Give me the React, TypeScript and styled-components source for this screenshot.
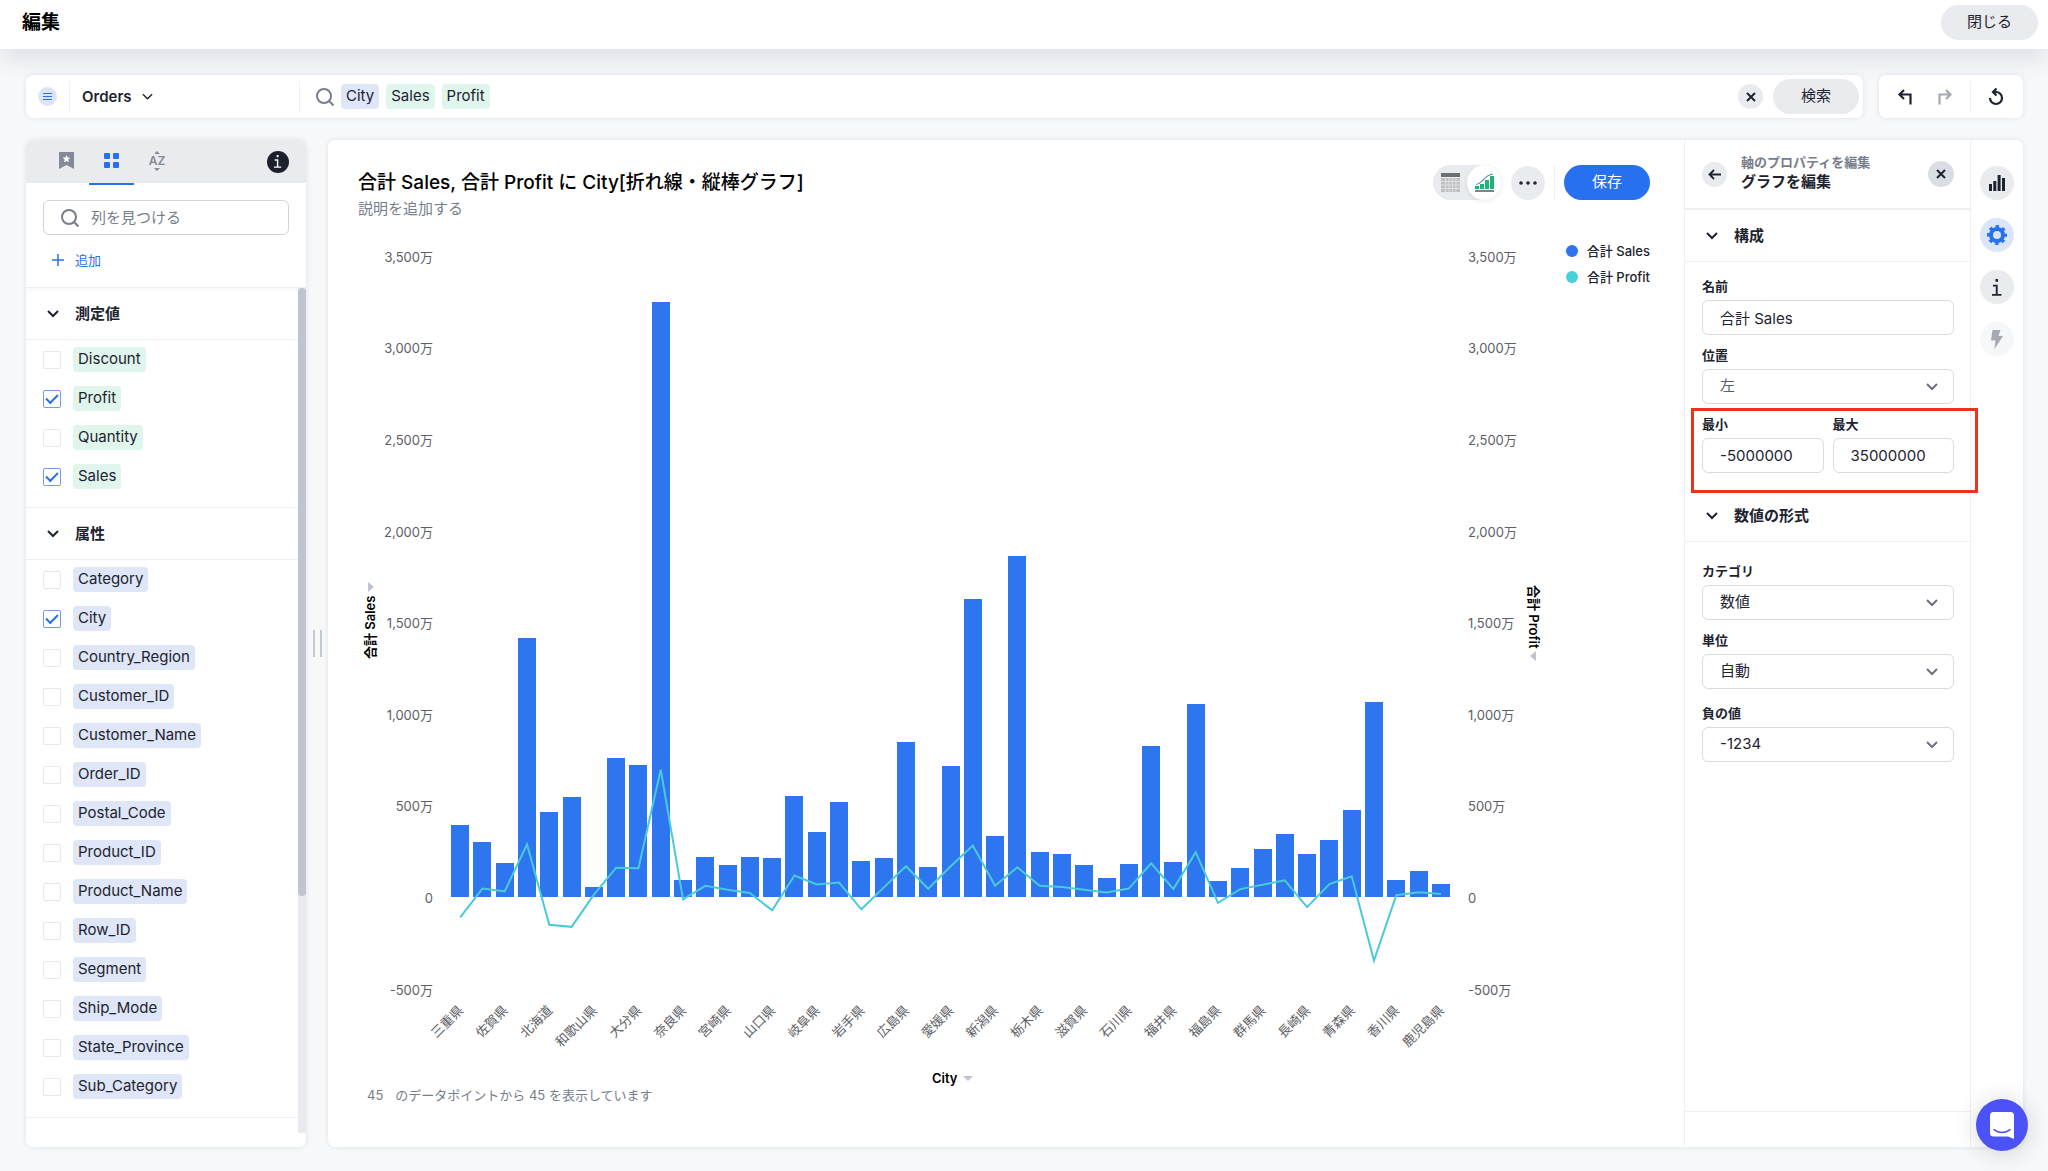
import React from "react";
import styled, { createGlobalStyle } from "styled-components";

const ink = "#1d232f";
const blue = "#2770ef";
const muted = "#777e8b";
const line = "#eef0f3";
const grey = "#eaebef";

const GlobalStyle = createGlobalStyle`
  *, *::before, *::after { box-sizing: border-box; }
  body {
    margin: 0;
    background: #f6f8fa;
    color: ${ink};
    font-family: Inter, "Noto Sans CJK JP", sans-serif;
    font-size: 15px;
    line-height: 20px;
  }
  button, input, select { font: inherit; color: inherit; margin: 0; }
  button { border: 0; padding: 0; background: none; cursor: pointer; }
  h1, h2, h3, p, ul { margin: 0; padding: 0; }
  ul { list-style: none; }
  svg { display: block; flex: none; }
`;

const Page = styled.div`
  display: flex;
  flex-direction: column;
  min-height: 100vh;
`;

const Header = styled.header`
  display: flex;
  align-items: center;
  justify-content: space-between;
  height: 49px;
  padding: 0 10px 4px 22px;
  background: #fff;
  box-shadow: 0 8px 24px rgba(25, 45, 65, 0.12);
`;

const PageTitle = styled.h1`
  color: #000;
  font-size: 19px;
  font-weight: 700;
  line-height: 28px;
`;

const Pill = styled.button<{ $primary?: boolean; $wide?: boolean }>`
  width: ${(p) => (p.$wide ? 97 : 86)}px;
  height: 35px;
  border-radius: 18px;
  padding-bottom: 2px;
  background: ${(p) => (p.$primary ? blue : grey)};
  color: ${(p) => (p.$primary ? "#fff" : ink)};
`;

const Round = styled.button<{ $size: number; $bg?: string; $color?: string }>`
  display: flex;
  flex: none;
  align-items: center;
  justify-content: center;
  width: ${(p) => p.$size}px;
  height: ${(p) => p.$size}px;
  border-radius: 50%;
  background: ${(p) => p.$bg ?? grey};
  color: ${(p) => p.$color ?? ink};
`;

const Workspace = styled.main`
  display: flex;
  flex: 1;
  flex-direction: column;
  gap: 22px;
  padding: 26px 25px 24px 26px;
`;

const TopRow = styled.div`
  display: flex;
  gap: 16px;
`;

const Card = styled.section`
  background: #fff;
  border-radius: 7px;
  box-shadow: 0 0 5px rgba(25, 45, 65, 0.1);
`;

const SearchBar = styled(Card)`
  display: flex;
  flex: 1;
  align-items: center;
  height: 43px;
  padding-right: 4px;
`;

const SourceArea = styled.div`
  display: flex;
  align-items: center;
  width: 274px;
  height: 31px;
  padding-left: 12px;
  border-right: 1px solid ${line};
`;

const SourceButton = styled.button`
  display: flex;
  align-items: center;
  gap: 10px;
  height: 31px;
  margin-left: 12px;
  padding-left: 12px;
  border-left: 1px solid ${line};
  font-weight: 600;
`;

const Tokens = styled.div`
  display: flex;
  flex: 1;
  align-items: center;
  gap: 7px;
  padding-left: 16px;
  color: ${muted};
`;

const Chip = styled.span<{ $measure?: boolean }>`
  display: inline-block;
  height: 25px;
  padding: 0 5px;
  border-radius: 4px;
  background: ${(p) => (p.$measure ? "#e0f6ed" : "#dee6f7")};
  color: ${ink};
  line-height: 24px;
`;

const BareInput = styled.input`
  flex: 1;
  min-width: 0;
  height: 31px;
  border: 0;
  outline: 0;
  padding: 0;
  background: none;
  &::placeholder { color: ${muted}; opacity: 1; }
`;

const SearchActions = styled.div`
  display: flex;
  align-items: center;
  gap: 10px;
`;

const History = styled(Card)`
  display: flex;
  align-items: center;
  gap: 6px;
  padding: 0 10px 0 9px;
`;

const Rule = styled.span<{ $gap: number; $height: number }>`
  width: 1px;
  height: ${(p) => p.$height}px;
  margin: 0 ${(p) => p.$gap}px;
  background: ${line};
`;

const Body = styled.div`
  display: flex;
  flex: 1;
`;

const Sidebar = styled(Card)`
  display: flex;
  flex: none;
  flex-direction: column;
  width: 280px;
  overflow: hidden;
`;

const Tabs = styled.div`
  display: flex;
  align-items: center;
  height: 43px;
  padding: 0 17px 0 18px;
  background: ${grey};
`;

const Tab = styled.button<{ $active?: boolean }>`
  display: flex;
  align-items: center;
  justify-content: center;
  width: 45px;
  height: 43px;
  padding-bottom: 2px;
  color: ${(p) => (p.$active ? blue : "#858b96")};
  box-shadow: ${(p) => (p.$active ? `0 2px 0 ${blue}` : "none")};
`;

const Push = styled.div`
  margin-left: auto;
`;

const Finder = styled.div`
  padding: 17px 17px 17px;
  border-bottom: 1px solid ${line};
  box-shadow: 0 2px 4px rgba(25, 45, 65, 0.04);
`;

const FinderBox = styled.label`
  display: flex;
  align-items: center;
  gap: 12px;
  height: 35px;
  padding: 0 17px;
  border: 1px solid #d0d4db;
  border-radius: 6px;
  color: ${muted};
`;

const AddButton = styled.button`
  display: flex;
  align-items: center;
  gap: 11px;
  margin-top: 15px;
  padding-left: 9px;
  color: ${blue};
  font-size: 13px;
  line-height: 20px;
`;

const ListArea = styled.div`
  display: flex;
  flex: 1;
  margin-bottom: 14px;
`;

const Lists = styled.div`
  flex: 1;
`;

const Track = styled.div`
  width: 8px;
  background: #e9eaee;
`;

const Thumb = styled.div`
  height: 72%;
  border-radius: 4px;
  background: #c0c4ce;
`;

const SectionHead = styled.button`
  display: flex;
  align-items: center;
  gap: 16px;
  width: 100%;
  height: 52px;
  padding: 0 21px;
  border-bottom: 1px solid ${line};
  font-weight: 700;
`;

const FieldList = styled.ul`
  padding-bottom: 11px;
  border-bottom: 1px solid ${line};
`;

const FieldRow = styled.li`
  display: flex;
  align-items: center;
  height: 39px;
  padding-left: 17px;
`;

const FieldLabel = styled.label`
  display: flex;
  align-items: center;
  gap: 12px;
`;

const Check = styled.input`
  appearance: none;
  display: flex;
  justify-content: center;
  width: 18px;
  height: 18px;
  margin: 0;
  border: 1px solid #e6e8ec;
  border-radius: 2px;
  background: #fff;
  &:checked { border-color: #6f9cec; }
  &:checked::after {
    content: "";
    width: 12px;
    height: 7px;
    margin-top: 3px;
    border: solid ${blue};
    border-width: 0 0 2px 2px;
    transform: rotate(-45deg);
  }
`;

const Gutter = styled.div`
  display: flex;
  flex: none;
  align-items: center;
  justify-content: center;
  width: 22px;
`;

const Handle = styled.div`
  width: 9px;
  height: 27px;
  border: solid #c5c9d1;
  border-width: 0 2px;
`;

const MainCard = styled(Card)`
  display: flex;
  flex: 1;
  min-width: 0;
`;

const ChartPane = styled.div`
  flex: 1;
  min-width: 0;
  padding: 25px 34px 0 30px;
`;

const ChartHead = styled.div`
  display: flex;
  align-items: flex-start;
  justify-content: space-between;
  height: 56px;
  margin-bottom: 16px;
`;

const ChartTitle = styled.h2`
  padding-top: 4px;
  color: #000;
  font-size: 19px;
  font-weight: 500;
  line-height: 28px;
`;

const ChartNote = styled.p`
  color: ${muted};
  line-height: 24px;
`;

const Controls = styled.div`
  display: flex;
  align-items: center;
`;

const Toggle = styled.div`
  display: flex;
  align-items: center;
  width: 68px;
  height: 35px;
  margin-right: 10px;
  border-radius: 18px;
  background: ${grey};
`;

const TogglePart = styled.button<{ $on?: boolean }>`
  display: flex;
  align-items: center;
  justify-content: center;
  width: 34px;
  height: 35px;
  border-radius: 50%;
  background: ${(p) => (p.$on ? "#fff" : "none")};
  box-shadow: ${(p) => (p.$on ? "0 1px 5px rgba(25, 45, 65, 0.1)" : "none")};
`;

const ChartRow = styled.div`
  display: flex;
  gap: 16px;
`;

const Plot = styled.div`
  flex: 1;
  min-width: 0;
  svg { width: 100%; height: auto; overflow: visible; }
  text { font-size: 13px; fill: #5c6066; }
  .name { font-weight: 600; fill: #000; }
`;

const Legend = styled.ul`
  flex: none;
  width: 84px;
  padding-top: 1px;
`;

const LegendItem = styled.li<{ $color: string }>`
  display: flex;
  align-items: center;
  gap: 9px;
  color: ${ink};
  font-size: 13px;
  font-weight: 500;
  line-height: 26px;
  white-space: nowrap;
  &::before {
    content: "";
    width: 12px;
    height: 12px;
    border-radius: 50%;
    background: ${(p) => p.$color};
  }
`;

const PointCount = styled.p`
  display: flex;
  gap: 12px;
  padding-left: 9px;
  color: ${muted};
  font-size: 13px;
  line-height: 22px;
`;

const Inspector = styled.aside`
  display: flex;
  flex: none;
  flex-direction: column;
  width: 287px;
  border: solid ${line};
  border-width: 0 1px;
`;

const InspectorHead = styled.div`
  display: flex;
  align-items: center;
  gap: 14px;
  height: 70px;
  padding: 0 16px 0 17px;
  border-bottom: 2px solid ${line};
`;

const InspectorNames = styled.div`
  padding-bottom: 4px;
`;

const Crumb = styled.p`
  color: ${muted};
  font-size: 13px;
  font-weight: 700;
  line-height: 20px;
`;

const InspectorTitle = styled.h2`
  font-size: 15px;
  font-weight: 700;
  line-height: 20px;
`;

const Group = styled.div<{ $top?: number; $bottom?: number }>`
  display: flex;
  flex-direction: column;
  gap: 10px;
  padding: ${(p) => p.$top ?? 14}px 16px ${(p) => p.$bottom ?? 0}px 17px;
`;

const Field = styled.label`
  display: flex;
  flex: 1;
  flex-direction: column;
  gap: 4px;
  min-width: 0;
  font-size: 13px;
  font-weight: 700;
  line-height: 20px;
`;

const TextBox = styled.input`
  width: 100%;
  height: 35px;
  padding: 0 17px;
  border: 1px solid #d8dbe1;
  border-radius: 6px;
  background: #fff;
  font-size: 15px;
  font-weight: 400;
`;

const SelectWrap = styled.span`
  position: relative;
  display: block;
  svg {
    position: absolute;
    top: 13px;
    right: 16px;
    color: #6b7280;
    pointer-events: none;
  }
`;

const Select = styled.select<{ $dim?: boolean }>`
  appearance: none;
  display: block;
  width: 100%;
  height: 35px;
  padding: 0 17px 2px;
  border: 1px solid #d8dbe1;
  border-radius: 6px;
  background: #fff;
  color: ${(p) => (p.$dim ? "#5a606c" : ink)};
  font-size: 15px;
  font-weight: 400;
`;

const RangeRow = styled.div`
  position: relative;
  display: flex;
  gap: 9px;
  &::after {
    content: "";
    position: absolute;
    inset: -6px -24px -20px -11px;
    border: 3px solid #e93419;
    pointer-events: none;
  }
`;

const InspectorFoot = styled.div`
  height: 36px;
  margin-top: auto;
  border-top: 1px solid ${line};
`;

const Rail = styled.nav`
  display: flex;
  flex: none;
  flex-direction: column;
  align-items: center;
  gap: 18px;
  width: 52px;
  padding-top: 26px;
`;

const Chat = styled(Round)`
  position: fixed;
  right: 20px;
  bottom: 20px;
  box-shadow: 0 2px 24px rgba(0, 0, 0, 0.16);
`;

type ChevronProps = { size?: number; weight?: number };
const Chevron = ({ size = 12, weight = 2 }: ChevronProps) => (
  <svg width={size} height="9" viewBox="0 0 12 9" fill="none" stroke="currentColor" strokeWidth={weight}>
    <path d="M1 2l5 5 5-5" />
  </svg>
);

const Magnifier = () => (
  <svg width="18" height="18" viewBox="0 0 18 18" fill="none" stroke="currentColor" strokeWidth="2">
    <circle cx="8" cy="8" r="7" />
    <path d="M13 13l4.5 4.5" />
  </svg>
);

const Cross = () => (
  <svg width="10" height="10" viewBox="0 0 10 10" fill="none" stroke="currentColor" strokeWidth="2">
    <path d="M1 1l8 8M9 1L1 9" />
  </svg>
);

const InfoMark = ({ h = 16 }: { h?: number }) => (
  <svg width={(h * 10) / 18} height={h} viewBox="0 0 10 18" fill="none" stroke="currentColor" strokeWidth="2">
    <path d="M5 0v3" strokeWidth="2.6" />
    <path d="M1 7h4v9M0 16.8h10" />
  </svg>
);

const Turn = ({ flip }: { flip?: boolean }) => (
  <svg width="16" height="16" viewBox="0 0 16 16" fill="none" stroke="currentColor" strokeWidth="2.2">
    <g transform={flip ? "translate(16 0) scale(-1 1)" : undefined}>
      <path d="M7 1L2.500 5.500 7 10M2.500 5.500H13.500V15.500" />
    </g>
  </svg>
);

const START = 91;
const END = 1094;
const ZERO = 660;
const UNIT = 91.6 / 500;

const sales = [
  391, 302, 186, 1416, 462, 544, 55, 757, 721, 3248, 91, 221, 175, 221, 213, 552, 357, 521, 197, 215, 847, 162, 715,
  1624, 334, 1864, 245, 233, 174, 103, 178, 826, 190, 1052, 85, 156, 263, 343, 233, 309, 473, 1064, 93, 144, 73,
];
const profit = [
  -111, 46, 31, 288, -152, -163, 13, 160, 157, 695, -13, 61, 40, 22, -73, 117, 68, 79, -67, 51, 168, 45, 166, 281, 61,
  162, 61, 55, 39, 25, 46, 184, 43, 245, -32, 43, 67, 91, -55, 71, 113, -347, 10, 26, 16,
];
const cities = [
  "三重県", "佐賀県", "北海道", "和歌山県", "大分県", "奈良県", "宮崎県", "山口県", "岐阜県", "岩手県", "広島県", "愛媛県",
  "新潟県", "栃木県", "滋賀県", "石川県", "福井県", "福島県", "群馬県", "長崎県", "青森県", "香川県", "鹿児島県",
];
const ticks = [3500, 3000, 2500, 2000, 1500, 1000, 500, 0, -500];

const step = (END - START) / sales.length;
const xAt = (i: number) => START + step * (i + 0.5);
const yAt = (v: number) => ZERO - v * UNIT;
const tickText = (v: number) => (v === 0 ? "0" : `${v.toLocaleString("en-US")}万`);

const ComboChart = () => (
  <svg viewBox="0 0 1192 847" role="img" aria-label="合計 Sales, 合計 Profit に City">
    {ticks.map((t) => (
      <g key={t}>
        <text x="75" y={yAt(t) + 6} textAnchor="end">{tickText(t)}</text>
        <text x="1110" y={yAt(t) + 6}>{tickText(t)}</text>
      </g>
    ))}
    {sales.map((v, i) => (
      <rect
        key={i}
        x={Math.round(xAt(i) - 9)}
        y={Math.round(yAt(v))}
        width="18"
        height={ZERO - Math.round(yAt(v))}
        fill="#2e75f0"
      />
    ))}
    <polyline
      points={profit.map((v, i) => `${xAt(i)},${yAt(v)}`).join(" ")}
      fill="none"
      stroke="#48cbd6"
      strokeWidth="2"
    />
    {cities.map((c, i) => (
      <text key={c} textAnchor="end" transform={`translate(${xAt(i * 2) + 4} 774) rotate(-45)`}>
        {c}
      </text>
    ))}
    <text className="name" transform="translate(17 422) rotate(-90)">合計 Sales</text>
    <path d="M10 345l6 5-6 5z" fill="#c0c4ce" />
    <text className="name" transform="translate(1171 348) rotate(90)">合計 Profit</text>
    <path d="M1178 414l-6 5 6 5z" fill="#c0c4ce" />
    <text className="name" x="574" y="846">City</text>
    <path d="M605 839h10l-5 5z" fill="#c0c4ce" />
  </svg>
);

const measures = ["Discount", "Profit", "Quantity", "Sales"];
const attributes = [
  "Category", "City", "Country_Region", "Customer_ID", "Customer_Name", "Order_ID", "Postal_Code", "Product_ID",
  "Product_Name", "Row_ID", "Segment", "Ship_Mode", "State_Province", "Sub_Category",
];
const chosen = ["Profit", "Sales", "City"];

const Columns = ({ title, names, measure }: { title: string; names: string[]; measure?: boolean }) => (
  <>
    <SectionHead>
      <Chevron weight={2} />
      {title}
    </SectionHead>
    <FieldList>
      {names.map((n) => (
        <FieldRow key={n}>
          <FieldLabel>
            <Check type="checkbox" defaultChecked={chosen.includes(n)} />
            <Chip $measure={measure}>{n}</Chip>
          </FieldLabel>
        </FieldRow>
      ))}
    </FieldList>
  </>
);

const Choice = ({ label, value, dim }: { label: string; value: string; dim?: boolean }) => (
  <Field>
    {label}
    <SelectWrap>
      <Select defaultValue={value} $dim={dim}>
        <option>{value}</option>
      </Select>
      <Chevron />
    </SelectWrap>
  </Field>
);

export default function App() {
  return (
    <Page>
      <GlobalStyle />
      <Header>
        <PageTitle>編集</PageTitle>
        <Pill $wide>閉じる</Pill>
      </Header>
      <Workspace>
        <TopRow>
          <SearchBar>
            <SourceArea>
              <Round $size={19} $bg="#dbe5fa" $color={blue} aria-label="データソース">
                <svg width="9" height="9" viewBox="0 0 9 9" stroke="currentColor">
                  <path d="M0 1.500h9M0 4.500h9M0 7.500h9" />
                </svg>
              </Round>
              <SourceButton>
                Orders
                <Chevron size={11} weight={1.5} />
              </SourceButton>
            </SourceArea>
            <Tokens>
              <Magnifier />
              <Chip>City</Chip>
              <Chip $measure>Sales</Chip>
              <Chip $measure>Profit</Chip>
              <BareInput aria-label="検索" />
            </Tokens>
            <SearchActions>
              <Round $size={25} aria-label="クリア"><Cross /></Round>
              <Pill>検索</Pill>
            </SearchActions>
          </SearchBar>
          <History>
            <Round $size={34} $bg="none" aria-label="元に戻す"><Turn /></Round>
            <Round $size={34} $bg="none" $color="#a5a9b1" aria-label="やり直す"><Turn flip /></Round>
            <Rule $gap={2} $height={31} />
            <Round $size={34} $bg="none" aria-label="リセット">
              <svg width="16" height="20" viewBox="0 0 16 20" fill="none" stroke="currentColor" strokeWidth="2.2">
                <path d="M8.500 1.500L5 5l3.500 3.500M6 5h2a6 6 0 1 1-6 6" />
              </svg>
            </Round>
          </History>
        </TopRow>
        <Body>
          <Sidebar>
            <Tabs>
              <Tab aria-label="ブックマーク">
                <svg width="15" height="17" viewBox="0 0 15 17" fill="currentColor">
                  <path d="M0 0h15v17l-7.500-4L0 17z" />
                  <path fill="#fff" d="M7.500 3l1.100 2.500 2.700.3-2 1.800.6 2.700-2.400-1.400-2.400 1.400.6-2.700-2-1.800 2.700-.3z" />
                </svg>
              </Tab>
              <Tab $active aria-label="グリッド">
                <svg width="15" height="15" viewBox="0 0 15 15" fill="currentColor">
                  <rect width="6" height="6" rx="1" />
                  <rect x="9" width="6" height="6" rx="1" />
                  <rect y="9" width="6" height="6" rx="1" />
                  <rect x="9" y="9" width="6" height="6" rx="1" />
                </svg>
              </Tab>
              <Tab aria-label="並べ替え">
                <svg width="18" height="20" viewBox="0 0 18 20" fill="currentColor">
                  <path d="M9 0l3 3H6zM9 20l3-3H6z" />
                  <text x="9" y="14" textAnchor="middle" fontSize="12" fontWeight="600">AZ</text>
                </svg>
              </Tab>
              <Push>
                <Round $size={22} $bg="#1b202c" $color="#fff" aria-label="情報"><InfoMark h={13} /></Round>
              </Push>
            </Tabs>
            <Finder>
              <FinderBox>
                <Magnifier />
                <BareInput placeholder="列を見つける" aria-label="列を見つける" />
              </FinderBox>
              <AddButton>
                <svg width="12" height="12" viewBox="0 0 12 12" stroke="currentColor" strokeWidth="1.500">
                  <path d="M6 0v12M0 6h12" />
                </svg>
                追加
              </AddButton>
            </Finder>
            <ListArea>
              <Lists>
                <Columns title="測定値" names={measures} measure />
                <Columns title="属性" names={attributes} />
              </Lists>
              <Track><Thumb /></Track>
            </ListArea>
          </Sidebar>
          <Gutter><Handle /></Gutter>
          <MainCard>
            <ChartPane>
              <ChartHead>
                <div>
                  <ChartTitle>合計 Sales, 合計 Profit に City[折れ線・縦棒グラフ]</ChartTitle>
                  <ChartNote>説明を追加する</ChartNote>
                </div>
                <Controls>
                  <Toggle>
                    <TogglePart aria-label="表">
                      <svg width="19" height="19" viewBox="0 0 19 19">
                        <rect width="19" height="4" fill="#6d6f73" />
                        <rect x="0" y="5" width="19" height="14" fill="#bfc0c2" />
                        <path d="M4.500 5v14M8 5v14M11.500 5v14M15 5v14M0 8.500h19M0 12h19M0 15.500h19" stroke="#dfe0e2" />
                      </svg>
                    </TogglePart>
                    <TogglePart $on aria-label="グラフ">
                      <svg width="19" height="19" viewBox="0 0 19 19">
                        <path d="M0 13h4v3H0zM5 11h4v5H5zM10 7h4v9h-4zM15 3h4v13h-4z" fill="#1fb378" />
                        <path d="M0 18h19" stroke="#555b66" strokeWidth="1.500" />
                        <path d="M1 11.500c5-1.500 5-2.500 7.500-5S12 2 18 1" fill="none" stroke="#6e97b8" strokeWidth="1.200" />
                      </svg>
                    </TogglePart>
                  </Toggle>
                  <Round $size={34} aria-label="その他">
                    <svg width="18" height="4" viewBox="0 0 18 4" fill="currentColor">
                      <circle cx="2" cy="2" r="1.800" />
                      <circle cx="9" cy="2" r="1.800" />
                      <circle cx="16" cy="2" r="1.800" />
                    </svg>
                  </Round>
                  <Rule $gap={9} $height={35} />
                  <Pill $primary>保存</Pill>
                </Controls>
              </ChartHead>
              <ChartRow>
                <Plot><ComboChart /></Plot>
                <Legend>
                  <LegendItem $color="#2e75f0">合計 Sales</LegendItem>
                  <LegendItem $color="#48d1d8">合計 Profit</LegendItem>
                </Legend>
              </ChartRow>
              <PointCount>
                <span>45</span>
                <span>のデータポイントから 45 を表示しています</span>
              </PointCount>
            </ChartPane>
            <Inspector>
              <InspectorHead>
                <Round $size={25} aria-label="戻る">
                  <svg width="13" height="11" viewBox="0 0 13 11" fill="none" stroke="currentColor" strokeWidth="1.800">
                    <path d="M13 5.500H1.500M6 1L1.500 5.500 6 10" />
                  </svg>
                </Round>
                <InspectorNames>
                  <Crumb>軸のプロパティを編集</Crumb>
                  <InspectorTitle>グラフを編集</InspectorTitle>
                </InspectorNames>
                <Push>
                  <Round $size={26} $bg="#dbdde5" aria-label="パネルを閉じる"><Cross /></Round>
                </Push>
              </InspectorHead>
              <SectionHead><Chevron />構成</SectionHead>
              <Group $bottom={17}>
                <Field>
                  名前
                  <TextBox defaultValue="合計 Sales" />
                </Field>
                <Choice label="位置" value="左" dim />
                <RangeRow>
                  <Field>
                    最小
                    <TextBox defaultValue="-5000000" />
                  </Field>
                  <Field>
                    最大
                    <TextBox defaultValue="35000000" />
                  </Field>
                </RangeRow>
              </Group>
              <SectionHead><Chevron />数値の形式</SectionHead>
              <Group $top={19}>
                <Choice label="カテゴリ" value="数値" />
                <Choice label="単位" value="自動" />
              </Group>
              <Group>
                <Choice label="負の値" value="-1234" />
              </Group>
              <InspectorFoot />
            </Inspector>
            <Rail>
              <Round $size={34} aria-label="グラフの種類">
                <svg width="16" height="16" viewBox="0 0 16 16" fill="currentColor">
                  <path d="M0 9h3v7H0zM4.300 6h3v10h-3zM8.600 0h3v16h-3zM13 3h3v13h-3z" />
                </svg>
              </Round>
              <Round $size={34} $bg="#dbe5fa" $color={blue} aria-label="設定">
                <svg width="20" height="20" viewBox="0 0 20 20" fill="none" stroke="currentColor">
                  <circle cx="10" cy="10" r="6" strokeWidth="4" />
                  <circle cx="10" cy="10" r="8.500" strokeWidth="3" strokeDasharray="3.340 3.340" strokeDashoffset="1.670" />
                </svg>
              </Round>
              <Round $size={34} aria-label="情報"><InfoMark h={17} /></Round>
              <Round $size={34} $bg="#f6f7f9" $color="#a5a9b1" aria-label="カスタムアクション">
                <svg width="12" height="19" viewBox="0 0 12 19" fill="currentColor">
                  <path d="M1.500 0h8L7.500 6H12L3.500 19l1-8.500H0z" />
                </svg>
              </Round>
            </Rail>
          </MainCard>
        </Body>
      </Workspace>
      <Chat $size={52} $bg="#4b52f6" $color="#fff" aria-label="チャット">
        <svg width="24" height="27" viewBox="0 0 24 27" fill="none">
          <path d="M3.500 0h17A3.500 3.500 0 0 1 24 3.500V27l-6-2.500H3.500A3.500 3.500 0 0 1 0 21V3.500A3.500 3.500 0 0 1 3.500 0z" fill="#fff" />
          <path d="M4 17.500c4.500 4 11.500 4 16 0" stroke="#4b52f6" strokeWidth="1.500" strokeLinecap="round" />
        </svg>
      </Chat>
    </Page>
  );
}
